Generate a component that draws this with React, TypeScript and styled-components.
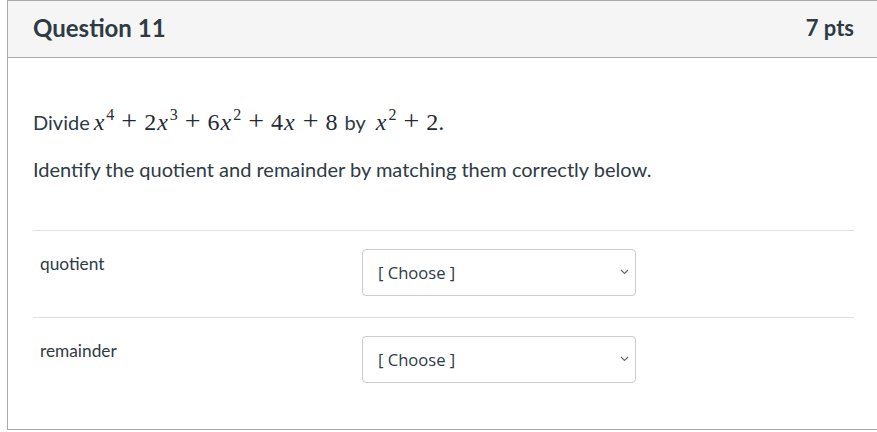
import React from "react";
import styled, { createGlobalStyle } from "styled-components";

const Global = createGlobalStyle`
  html, body { margin: 0; padding: 0; background: #fff; overflow: hidden; }
  body { font-family: Lato, "Noto Sans", sans-serif; color: #2d3b45; }
`;

const Panel = styled.section`
  margin-left: 7px;
  width: 870px;
  border: 1px solid #a8a8a8;
  border-right: none;
`;

const Header = styled.header`
  box-sizing: border-box;
  height: 57px;
  background: #f5f5f5;
  border-bottom: 1px solid #a8a8a8;
  display: flex;
  align-items: center;
  justify-content: space-between;
  padding: 0 24px 3px 25px;
`;

const Title = styled.h2`
  margin: 0;
  font-size: 24px;
  font-weight: 700;
  color: #2d3b45;
`;

const Points = styled.span`
  font-size: 22px;
  font-weight: 700;
  color: #2d3b45;
`;

const Body = styled.div`
  padding: 51px 24px 25px 25px;
`;

const Text = styled.p<{ $gap?: number }>`
  margin: 0 0 ${({ $gap }) => $gap ?? 0}px;
  font-size: 20px;
  line-height: 27px;
`;

const Formula = styled.span`
  font-family: "Liberation Serif", "Times New Roman", serif;
  font-size: 24px;
  margin: 0 7px 0 3px;
  color: #1f2a33;
`;

const V = styled.i`
  font-style: italic;
  padding: 0 1px;
`;

const Sup = styled.sup`
  font-size: 16px;
  line-height: 0;
  vertical-align: 10px;
  margin-left: 1px;
`;

const Op = styled.span`
  font-size: 28px;
  line-height: 0;
  margin: 0 7px;
`;

const Answers = styled.div``;

const Row = styled.div`
  display: flex;
  align-items: flex-start;
  border-top: 1px solid #dde0e3;
  padding: 18px 0 21px 7px;
`;

const Label = styled.div`
  width: 322px;
  padding-top: 5px;
  font-size: 17.3px;
  line-height: 20px;
  color: #2d3b45;
`;

const SelectWrap = styled.div`
  position: relative;
  width: 274px;
`;

const Select = styled.select`
  appearance: none;
  width: 100%;
  height: 47px;
  border: 1px solid #c7cdd1;
  border-radius: 4px;
  background: #fff;
  padding: 0 30px 0 15px;
  font-family: "Open Sans", "Noto Sans", sans-serif;
  font-size: 16.6px;
  color: #2d3b45;
  outline: none;
`;

const Chevron = styled.svg`
  position: absolute;
  right: 7px;
  top: 20px;
  pointer-events: none;
`;

const Choice = ({ label }: { label: string }) => (
  <Row>
    <Label>{label}</Label>
    <SelectWrap>
      <Select defaultValue="">
        <option value="">[ Choose ]</option>
      </Select>
      <Chevron width="9" height="6" viewBox="0 0 9 6">
        <path d="M1 1l3.5 3.5L8 1" fill="none" stroke="#6b6b6b" strokeWidth="1.2" />
      </Chevron>
    </SelectWrap>
  </Row>
);

export default function App() {
  return (
    <>
      <Global />
      <Panel>
        <Header>
          <Title>Question 11</Title>
          <Points>7 pts</Points>
        </Header>
        <Body>
          <Text $gap={20}>
            Divide
            <Formula>
              <V>x</V>
              <Sup>4</Sup>
              <Op>+</Op>2<V>x</V>
              <Sup>3</Sup>
              <Op>+</Op>6<V>x</V>
              <Sup>2</Sup>
              <Op>+</Op>4<V>x</V>
              <Op>+</Op>8
            </Formula>
            by
            <Formula>
              {" "}
              <V>x</V>
              <Sup>2</Sup>
              <Op>+</Op>2.
            </Formula>
          </Text>
          <Text $gap={47}>Identify the quotient and remainder by matching them correctly below.</Text>
          <Answers>
            <Choice label="quotient" />
            <Choice label="remainder" />
          </Answers>
        </Body>
      </Panel>
    </>
  );
}
